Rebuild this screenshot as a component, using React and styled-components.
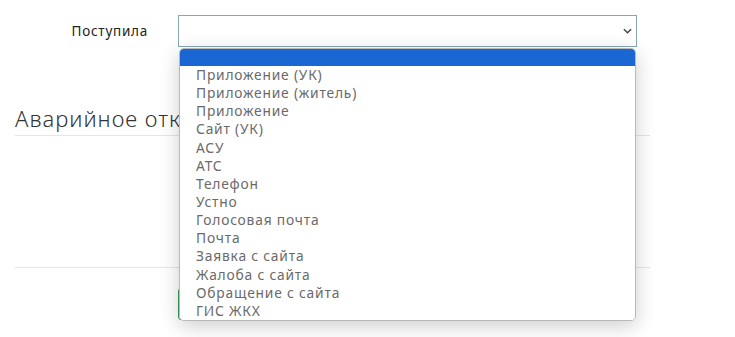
import React from 'react';
import styled, { createGlobalStyle } from 'styled-components';

const GlobalStyle = createGlobalStyle`
  body {
    margin: 0;
    background: #fff;
    font-family: "Noto Sans", "DejaVu Sans", sans-serif;
  }
`;

const sources = [
  'Приложение (УК)',
  'Приложение (житель)',
  'Приложение',
  'Сайт (УК)',
  'АСУ',
  'АТС',
  'Телефон',
  'Устно',
  'Голосовая почта',
  'Почта',
  'Заявка с сайта',
  'Жалоба с сайта',
  'Обращение с сайта',
  'ГИС ЖКХ',
];

const App = () => (
  <Page>
    <GlobalStyle />
    <FormRow>
      <Label>Поступила</Label>
      <SelectWrap>
        <SelectBox>
          <Chevron viewBox="0 0 10 6">
            <path d="M1 1l4 4 4-4" fill="none" stroke="#444" strokeWidth="1.6" />
          </Chevron>
        </SelectBox>
        <Dropdown>
          <Option active />
          {sources.map(s => (
            <Option key={s}>{s}</Option>
          ))}
        </Dropdown>
      </SelectWrap>
    </FormRow>
    <Section>
      <Heading>Аварийное отключение</Heading>
      <Body />
      <Footer>
        <SaveButton>Сохранить</SaveButton>
      </Footer>
    </Section>
  </Page>
);

const Page = styled.div`
  width: 650px;
  min-height: 337px;
  box-sizing: border-box;
  padding-top: 15px;
`;

const FormRow = styled.div`
  display: grid;
  grid-template-columns: 178px 459px;
  align-items: center;
`;

const Label = styled.div`
  font-size: 13.5px;
  letter-spacing: 0.75px;
  color: #222;
  text-align: right;
  padding-right: 30px;
`;

const SelectWrap = styled.div`
  position: relative;
`;

const SelectBox = styled.div`
  height: 32px;
  box-sizing: border-box;
  border: 1px solid #86a9b0;
  display: flex;
  align-items: center;
  justify-content: flex-end;
  padding-right: 4px;
  background: #fff;
`;

const Chevron = styled.svg`
  width: 9px;
  height: 6px;
`;

const Dropdown = styled.div`
  position: absolute;
  top: 33px;
  left: 1px;
  width: 457px;
  box-sizing: border-box;
  border: 1px solid #b9b9b9;
  border-radius: 5px;
  background: #fff;
  overflow: hidden;
  box-shadow: 0 5px 20px rgba(0, 0, 0, 0.2);
  z-index: 10;
`;

const Option = styled.div`
  height: ${p => (p.active ? '17px' : '18.15px')};
  line-height: 18.15px;
  padding-left: 16px;
  font-size: 13.8px;
  letter-spacing: 0.8px;
  color: #6a6a6a;
  white-space: nowrap;
  background: ${p => (p.active ? '#1a66d2' : '#fff')};
`;

const Section = styled.div`
  padding: 0 0 0 15px;
  margin-top: 56px;
`;

const Heading = styled.h2`
  margin: 0;
  font-size: 22px;
  font-weight: 300;
  letter-spacing: 1px;
  color: #333;
  padding-bottom: 2px;
  border-bottom: 1px solid #e6e6e6;
  white-space: nowrap;
`;

const Body = styled.div`
  height: 131px;
  border-bottom: 1px solid #e6e6e6;
`;

const Footer = styled.div`
  padding: 20px 0 0 163px;
`;

const SaveButton = styled.button`
  height: 32px;
  width: 120px;
  border: 1px solid #3a9a5b;
  border-radius: 3px;
  background: #fff;
  color: #3a9a5b;
  font-family: inherit;
`;

export default App;
